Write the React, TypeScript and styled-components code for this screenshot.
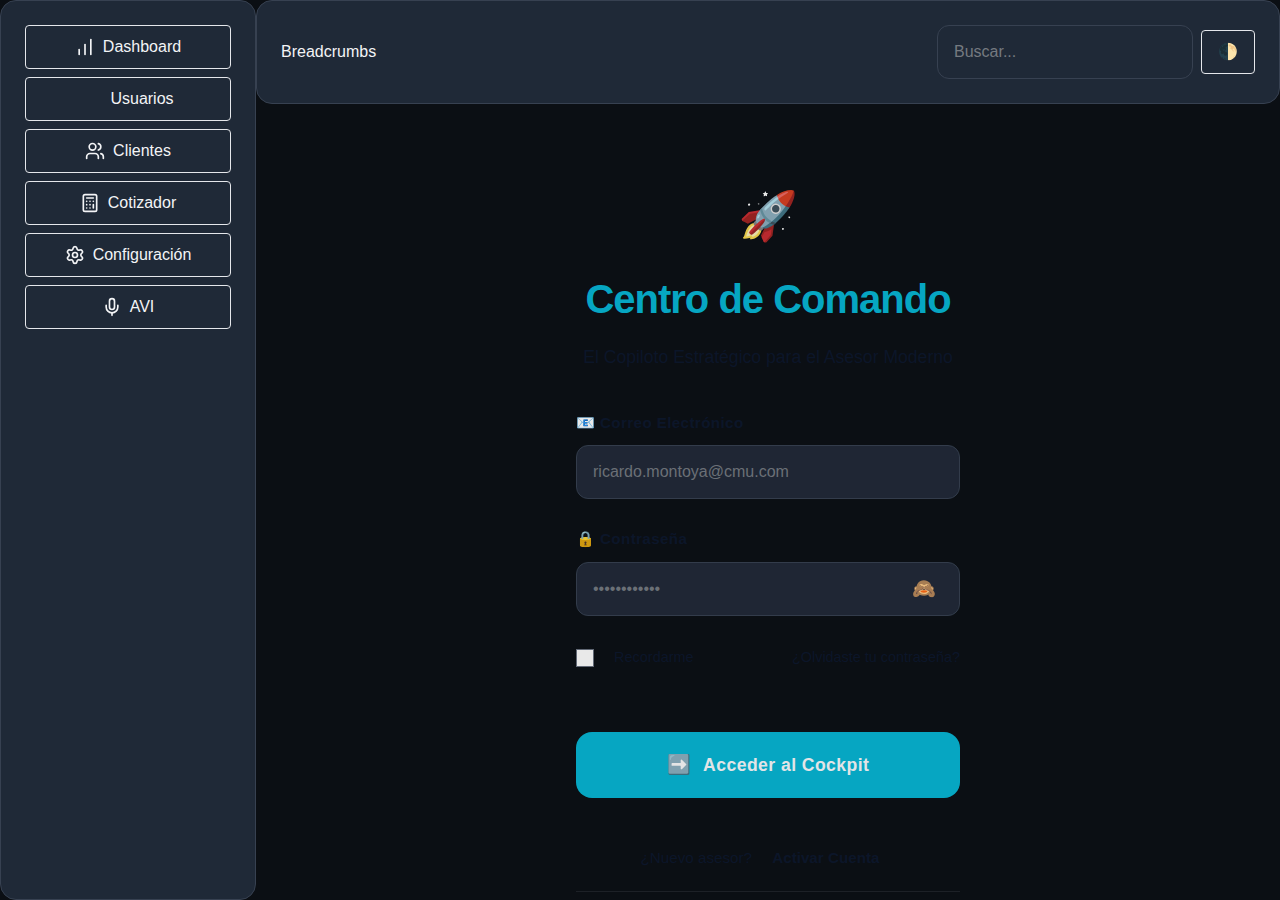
import React from "react";
import styled, { createGlobalStyle } from "styled-components";
import { ChartNoAxesColumnIncreasing, Users, Calculator, Settings, Mic } from "lucide-react";

const GlobalStyle = createGlobalStyle`
  *, *::before, *::after { box-sizing: border-box; }
  html, body { margin: 0; height: 100%; overflow: hidden; }
  body {
    background: #0b0f14;
    color: #f3f4f6;
    font-family: "Liberation Sans", Arial, sans-serif;
    font-size: 16px;
    line-height: 24px;
  }
  button, input { font: inherit; color: inherit; }
`;

const Shell = styled.div`
  display: grid;
  grid-template-columns: 256px 1fr;
  height: 100vh;
  overflow: hidden;
`;

const Panel = styled.div`
  background: #1f2937;
  border: 1px solid #374151;
  border-radius: 16px;
  padding: 24px;
`;

const Sidebar = styled(Panel).attrs({ as: "nav" })`
  display: flex;
  flex-direction: column;
  gap: 8px;
`;

const OutlineButton = styled.button`
  display: flex;
  align-items: center;
  justify-content: center;
  gap: 8px;
  height: 44px;
  padding: 0 16px;
  background: transparent;
  border: 1px solid #e5e7eb;
  border-radius: 4px;
  line-height: 18px;
`;

const NavLabel = styled.span`
  padding-bottom: 1px;
`;

const IconSlot = styled.span`
  display: flex;
  width: 20px;
  height: 20px;
`;

const Column = styled.div`
  display: flex;
  flex-direction: column;
  min-width: 0;
`;

const Header = styled(Panel).attrs({ as: "header" })`
  display: flex;
  align-items: center;
  justify-content: space-between;
  flex: none;
  height: 104px;
`;

const Tools = styled.div`
  display: flex;
  align-items: center;
  gap: 8px;
`;

const TextInput = styled.input`
  width: 100%;
  height: 54px;
  padding: 0 16px;
  background: #1f2937;
  border: 1px solid #374151;
  border-radius: 12px;
  outline: none;
  &::placeholder { color: #757a80; opacity: 1; }
`;

const SearchInput = styled(TextInput)`
  width: 256px;
`;

const ThemeButton = styled(OutlineButton)`
  width: 54px;
`;

const Main = styled.main`
  display: flex;
  justify-content: center;
  padding-top: 80px;
`;

const LoginForm = styled.form`
  display: flex;
  flex-direction: column;
  width: 384px;
  color: #0d172c;
  opacity: 0.91;

  ${TextInput} {
    background: #212938;
  }
`;

const Rocket = styled.div`
  height: 64px;
  font-size: 48px;
  line-height: 64px;
  text-align: center;
  transform: translate(0.3px, 0.5px) rotate(0.5deg);
`;

const Title = styled.h1`
  margin: 27px 0 0;
  font-size: 40px;
  line-height: 48px;
  letter-spacing: -1px;
  text-align: center;
  color: #06b6d4;
`;

const Subtitle = styled.p`
  margin: 20px 0 0;
  font-size: 17.6px;
  line-height: 28px;
  text-align: center;
  white-space: nowrap;
`;

const Field = styled.div<{ $top: number; $gap: number }>`
  display: flex;
  flex-direction: column;
  gap: ${(p) => p.$gap}px;
  margin-top: ${(p) => p.$top}px;
`;

const FieldLabel = styled.label`
  font-size: 15.2px;
  font-weight: 700;
  line-height: 23px;
  letter-spacing: 0.38px;
`;

const PasswordBox = styled.div`
  position: relative;
`;

const RevealButton = styled.button`
  position: absolute;
  top: 11px;
  right: 16px;
  width: 40px;
  height: 32px;
  padding: 0;
  background: none;
  border: 0;
  font-size: 19.2px;
  line-height: 32px;
`;

const Options = styled.div`
  display: flex;
  align-items: center;
  justify-content: space-between;
  height: 24px;
  margin-top: 30px;
  font-size: 14.4px;
`;

const OptionText = styled.span`
  padding-bottom: 2px;
`;

const Remember = styled.label`
  display: flex;
  align-items: center;
  gap: 20px;
  letter-spacing: 0.05px;
`;

const Checkbox = styled.input`
  appearance: none;
  width: 18px;
  height: 18px;
  margin: 0;
  background: #fff;
  border: 1px solid #6b7280;
`;

const SubmitButton = styled.button`
  display: flex;
  align-items: center;
  justify-content: center;
  gap: 12px;
  height: 66px;
  margin-top: 62px;
  padding: 0;
  background: #06b6d4;
  border: 0;
  border-radius: 16px;
  color: #f8fafc;
  font-size: 17.6px;
  font-weight: 700;
  letter-spacing: 0.44px;
`;

const SubmitIcon = styled.span`
  font-size: 19.2px;
`;

const SignupRow = styled.div`
  margin-top: 48px;
  font-size: 15.2px;
  text-align: center;
`;

const SignupLink = styled.a`
  padding: 0 16px;
  font-weight: 700;
`;

const Divider = styled.hr`
  width: 100%;
  height: 1px;
  margin: 21px 0 0;
  background: #1f2329;
  border: 0;
`;

const navItems = [
  { label: "Dashboard", Icon: ChartNoAxesColumnIncreasing },
  { label: "Usuarios", Icon: null },
  { label: "Clientes", Icon: Users },
  { label: "Cotizador", Icon: Calculator },
  { label: "Configuración", Icon: Settings },
  { label: "AVI", Icon: Mic },
];

export default function App() {
  return (
    <>
      <GlobalStyle />
      <Shell>
        <Sidebar>
          {navItems.map(({ label, Icon }) => (
            <OutlineButton key={label}>
              <IconSlot>{Icon && <Icon size={20} />}</IconSlot>
              <NavLabel>{label}</NavLabel>
            </OutlineButton>
          ))}
        </Sidebar>
        <Column>
          <Header>
            <span>Breadcrumbs</span>
            <Tools>
              <SearchInput placeholder="Buscar..." />
              <ThemeButton>🌓</ThemeButton>
            </Tools>
          </Header>
          <Main>
            <LoginForm onSubmit={(e) => e.preventDefault()}>
              <Rocket>🚀</Rocket>
              <Title>Centro de Comando</Title>
              <Subtitle>El Copiloto Estratégico para el Asesor Moderno</Subtitle>
              <Field $top={40} $gap={11}>
                <FieldLabel htmlFor="email">📧 Correo Electrónico</FieldLabel>
                <TextInput id="email" type="email" placeholder="ricardo.montoya@cmu.com" />
              </Field>
              <Field $top={28} $gap={12}>
                <FieldLabel htmlFor="password">🔒 Contraseña</FieldLabel>
                <PasswordBox>
                  <TextInput id="password" type="password" placeholder="••••••••••••" />
                  <RevealButton type="button">🙈</RevealButton>
                </PasswordBox>
              </Field>
              <Options>
                <Remember>
                  <Checkbox type="checkbox" />
                  <OptionText>Recordarme</OptionText>
                </Remember>
                <OptionText>¿Olvidaste tu contraseña?</OptionText>
              </Options>
              <SubmitButton type="submit">
                <SubmitIcon>➡️</SubmitIcon>
                <span>Acceder al Cockpit</span>
              </SubmitButton>
              <SignupRow>
                ¿Nuevo asesor? <SignupLink>Activar Cuenta</SignupLink>
              </SignupRow>
              <Divider />
            </LoginForm>
          </Main>
        </Column>
      </Shell>
    </>
  );
}
